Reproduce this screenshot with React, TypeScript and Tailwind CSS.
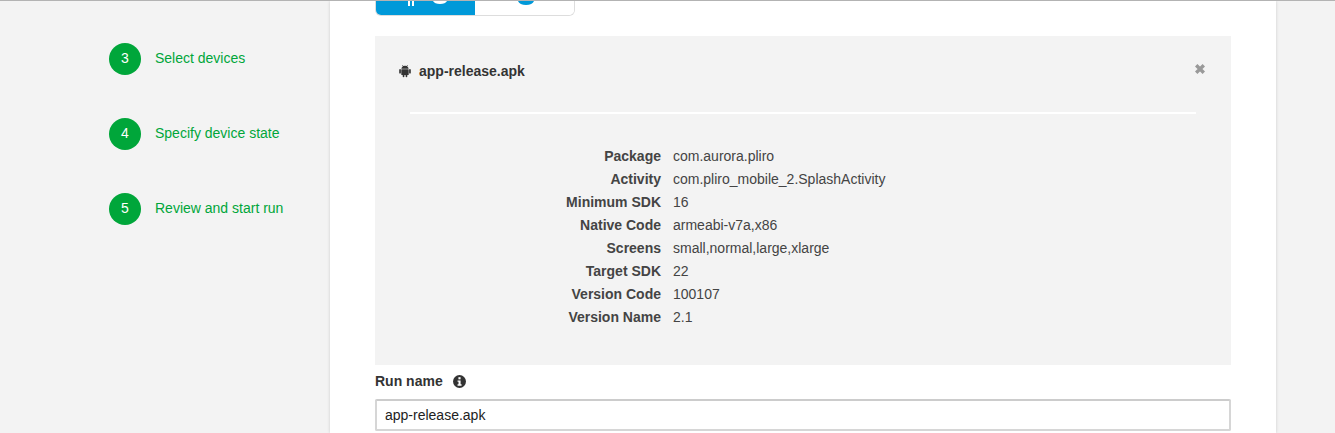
import React from "react";

function Android() {
  return (
    <svg viewBox="0 0 12 14" className="w-3 h-[14px] block" fill="#333333">
      <path d="M2.3 4.8a3.6 3.6 0 0 1 1.5-2.4L3.2 1.2l.5-.2.6 1.1a3.9 3.9 0 0 1 3.4 0l.6-1.1.5.2-.6 1.2a3.6 3.6 0 0 1 1.5 2.4z" />
      <rect x="2.3" y="5.2" width="7.4" height="5.8" rx=".6" />
      <rect x="0.2" y="5.1" width="1.7" height="4.4" rx=".85" />
      <rect x="10.1" y="5.1" width="1.7" height="4.4" rx=".85" />
      <rect x="3.7" y="10" width="1.7" height="3.2" rx=".85" />
      <rect x="6.6" y="10" width="1.7" height="3.2" rx=".85" />
    </svg>
  );
}

function Step({ n, label }: { n: number; label: string }) {
  return (
    <div className="flex items-center h-8">
      <div className="w-8 h-8 pb-[2px] rounded-full bg-[#00a63a] text-white flex items-center justify-center text-[14px] shrink-0">
        {n}
      </div>
      <span className="ml-[14px] pb-[2px] text-[14px] text-[#00a63a]">{label}</span>
    </div>
  );
}

const rows: [string, string][] = [
  ["Package", "com.aurora.pliro"],
  ["Activity", "com.pliro_mobile_2.SplashActivity"],
  ["Minimum SDK", "16"],
  ["Native Code", "armeabi-v7a,x86"],
  ["Screens", "small,normal,large,xlarge"],
  ["Target SDK", "22"],
  ["Version Code", "100107"],
  ["Version Name", "2.1"],
];

export default function App() {
  return (
    <div className="w-[1335px] h-[433px] overflow-hidden bg-[#f3f3f3] border-t border-[#b3b3b3] flex font-['Liberation_Sans',Arial,sans-serif] text-[14px] text-[#444444]">
      <aside className="w-[330px] shrink-0 pl-[109px] pt-[42px] flex flex-col gap-[43px]">
        <Step n={3} label="Select devices" />
        <Step n={4} label="Specify device state" />
        <Step n={5} label="Review and start run" />
      </aside>
      <main className="relative w-[946px] shrink-0 h-[432px] bg-white shadow-[0_0_3px_rgba(0,0,0,0.16)] px-[45px]">
        <div className="w-[200px] h-[15px] flex rounded-b-[6px] border border-t-0 border-[#dddddd] overflow-hidden">
          <div className="w-[100px] -ml-px bg-[#0099d9] flex items-start">
            <div className="ml-[33px] w-[2px] h-[5px] bg-white" />
            <div className="ml-[2px] w-[2px] h-[5px] bg-white" />
            <svg viewBox="0 0 14 3" className="ml-[19px] w-[14px] h-[3px]" fill="#ffffff">
              <path d="M0 0h14c-1 2-3.5 3-7 3S1 2 0 0z" />
            </svg>
          </div>
          <div className="flex-1 bg-white flex justify-center pl-[2px]">
            <svg viewBox="0 0 16 4" className="w-[16px] h-[4px]" fill="#0099d9">
              <path d="M0 0h16c-1 2.5-4 4-8 4S1 2.5 0 0z" />
            </svg>
          </div>
        </div>
        <section className="mt-5 h-[329px] bg-[#f3f3f3] px-[35px] relative">
          <div className="flex items-center h-[76px] pb-[6px] -ml-[11px] gap-[8px] font-bold text-[#333333]">
            <Android />
            <span>app-release.apk</span>
          </div>
          <div className="border-t-2 border-white h-0" />
          <svg viewBox="0 0 10 10" className="absolute right-[26px] top-[28px] w-[10px] h-[10px]" stroke="#999999" strokeWidth="3.4">
            <path d="M1.2 1.2l7.6 7.6M8.8 1.2l-7.6 7.6" />
          </svg>
          <dl className="mt-[31px] flex flex-col">
            {rows.map(([k, v]) => (
              <div key={k} className="flex h-[23px] items-center">
                <dt className="w-[251px] text-right font-bold">{k}</dt>
                <dd className="ml-3">{v}</dd>
              </div>
            ))}
          </dl>
        </section>
        <div className="mt-[7px] flex items-center font-bold text-[#333333] h-[18px]">
          Run name
          <svg viewBox="0 0 12 12" className="ml-[10px] w-[13px] h-[13px]">
            <circle cx="6" cy="6" r="6" fill="#333333" />
            <rect x="5" y="2" width="2" height="2" fill="#fff" />
            <path d="M4.2 5h2.8v3.6h.9V10H4.2V8.6h.9V6.3h-.9z" fill="#fff" />
          </svg>
        </div>
        <input
          readOnly
          value="app-release.apk"
          className="mt-[9px] block w-full h-8 border-2 border-[#d6d6d6] border-t-[#cccccc] rounded-[2px] px-[8px] bg-white text-[14px] text-[#222222] outline-none"
        />
      </main>
    </div>
  );
}
